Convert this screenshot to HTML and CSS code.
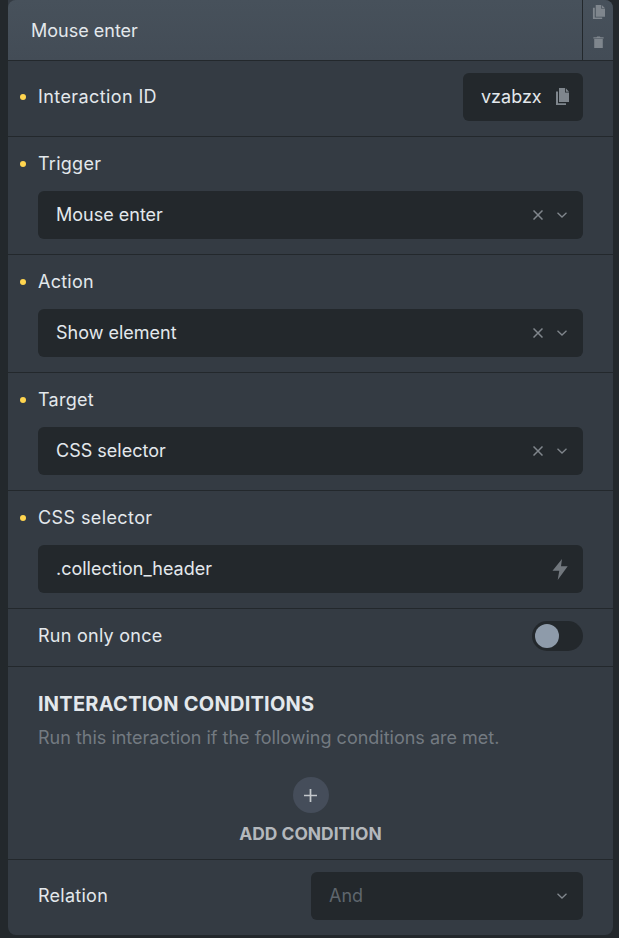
FILE: index.html
```html
<!DOCTYPE html>
<html lang="en">
<head>
<meta charset="utf-8">
<title>Mouse enter</title>
<link rel="stylesheet" href="styles.css">
</head>
<body>
<main class="card">
  <header class="head">
    <span class="head-title">Mouse enter</span>
    <div class="head-actions">
      <svg class="head-icon" viewBox="0 0 14 16"><path d="M4 0h6v4h4v8.5H4z"/><path d="M10.8 0.2 14 3.3h-3.2z"/><path d="M1 3h2v10.5h8V15H1z"/></svg>
      <svg class="head-icon trash" viewBox="0 0 12 14"><path d="M0 1.6h3.600L4.300.6h3.400l.7 1H12v1.200H0z"/><path d="M1 3.600h10V14H1z"/></svg>
    </div>
  </header>

  <section class="row row-inline row-id">
    <label class="label dot label-wide">Interaction ID</label>
    <div class="id-box">
      <span>vzabzx</span>
      <svg class="id-icon" viewBox="0 0 14 16" preserveAspectRatio="none"><path d="M4 0h6v4h4v8.5H4z"/><path d="M10.8 0.2 14 3.3h-3.2z"/><path d="M1 3h2v10.5h8V15H1z"/></svg>
    </div>
  </section>

  <section class="row row-stack">
    <label class="label dot">Trigger</label>
    <div class="field">
      <span class="field-text">Mouse enter</span>
      <svg class="x" viewBox="0 0 10 10"><path d="M.5.5l9 9M9.500.5l-9 9"/></svg>
      <svg class="chev" viewBox="0 0 10 6"><path d="M.5.8 5 5 9.500.8"/></svg>
    </div>
  </section>

  <section class="row row-stack">
    <label class="label dot">Action</label>
    <div class="field">
      <span class="field-text">Show element</span>
      <svg class="x" viewBox="0 0 10 10"><path d="M.5.5l9 9M9.500.5l-9 9"/></svg>
      <svg class="chev" viewBox="0 0 10 6"><path d="M.5.8 5 5 9.500.8"/></svg>
    </div>
  </section>

  <section class="row row-stack">
    <label class="label dot">Target</label>
    <div class="field">
      <span class="field-text">CSS selector</span>
      <svg class="x" viewBox="0 0 10 10"><path d="M.5.5l9 9M9.500.5l-9 9"/></svg>
      <svg class="chev" viewBox="0 0 10 6"><path d="M.5.8 5 5 9.500.8"/></svg>
    </div>
  </section>

  <section class="row row-stack">
    <label class="label dot label-wide">CSS selector</label>
    <div class="field">
      <span class="field-text">.collection_header</span>
      <svg class="bolt" viewBox="0 0 16 21"><path d="M10 0 .5 11.700h6.800L5.700 21l10-13.700H9z"/></svg>
    </div>
  </section>

  <section class="row row-inline row-toggle">
    <label class="label">Run only once</label>
    <div class="toggle"><span class="knob"></span></div>
  </section>

  <section class="conditions">
    <h3 class="cond-title">INTERACTION CONDITIONS</h3>
    <p class="cond-desc">Run this interaction if the following conditions are met.</p>
    <div class="add">
      <span class="add-btn"><svg viewBox="0 0 12 12"><path d="M6 0v12M0 6h12"/></svg></span>
      <span class="add-text">ADD CONDITION</span>
    </div>
  </section>

  <section class="row row-inline row-rel">
    <label class="label">Relation</label>
    <div class="field field-rel">
      <span class="field-text muted">And</span>
      <svg class="chev" viewBox="0 0 10 6"><path d="M.5.8 5 5 9.500.8"/></svg>
    </div>
  </section>
</main>
</body>
</html>
```
FILE: styles.css
```css
* { box-sizing: border-box; }
html, body { margin: 0; padding: 0; }
body {
  width: 619px;
  height: 938px;
  overflow: hidden;
  background: #23282c;
  font-family: Inter, "Liberation Sans", sans-serif;
  font-size: 18px;
  color: #e3e8ec;
  padding-left: 8px;
}
.card {
  width: 605px;
  height: 935px;
  background: #343b43;
  border-radius: 0 8px 8px 8px;
  overflow: hidden;
  display: flex;
  flex-direction: column;
}
.head {
  height: 61px;
  flex: none;
  display: flex;
  justify-content: space-between;
  border-bottom: 1px solid #23282c;
  background: linear-gradient(#47515b, #434c56);
  border-top-left-radius: 8px;
}
.head-title { padding: 1px 0 0 23px; line-height: 60px; }
.head-actions {
  width: 31px;
  border-left: 1px solid #23282c;
  display: flex;
  flex-direction: column;
  align-items: center;
  padding-top: 5px;
  gap: 16px;
}
.head-icon { width: 13px; height: 15px; fill: #7f868d; flex: none; }
.head-icon.trash { width: 11px; height: 12px; }
.row { border-bottom: 1px solid #23282c; padding: 0 30px; flex: none; }
.row-inline { display: flex; align-items: center; justify-content: space-between; }
.row-id { height: 76px; padding-bottom: 4px; }
.row-stack { height: 118px; padding-top: 15px; display: flex; flex-direction: column; }
.row-toggle { height: 58px; padding-bottom: 4px; }
.row-rel { height: 75px; border-bottom: 0; padding-bottom: 3px; }
.label { position: relative; line-height: 24px; letter-spacing: .26px; }
.label-wide { letter-spacing: .4px; }
.row-stack .label { margin-bottom: 15px; }
.dot::before {
  content: "";
  position: absolute;
  left: -18px;
  top: 9px;
  width: 6px;
  height: 6px;
  border-radius: 50%;
  background: #ffd54f;
}
.id-box {
  width: 120px;
  height: 48px;
  background: #23282c;
  border-radius: 6px;
  display: flex;
  align-items: center;
  padding-left: 18px;
  gap: 13px;
}
.id-icon { width: 14px; height: 18px; fill: #7f868d; }
.field {
  height: 48px;
  background: #23282c;
  border-radius: 6px;
  display: flex;
  align-items: center;
  padding: 0 16px 0 18px;
}
.field-text { flex: 1; position: relative; top: -1px; }
.muted { color: #5f666d; }
.x { width: 10px; height: 10px; stroke: #80868c; stroke-width: 1.5; fill: none; margin-right: 14px; }
.chev { width: 10px; height: 6px; stroke: #80868c; stroke-width: 1.3; fill: none; }
.bolt { width: 16px; height: 21px; fill: #71777d; margin-right: -1px; }
.toggle {
  width: 51px;
  height: 30px;
  background: #23282c;
  border-radius: 15px;
  padding: 3px;
}
.knob { display: block; width: 24px; height: 24px; border-radius: 50%; background: #8e9baa; }
.conditions {
  height: 193px;
  flex: none;
  border-bottom: 1px solid #23282c;
  padding: 23px 30px 0;
}
.cond-title { margin: 0; font-size: 20px; font-weight: 700; line-height: 28px; letter-spacing: .25px; color: #e3e8ec; }
.cond-desc { margin: 8px 0 0; line-height: 24px; color: #737a81; }
.add { margin-top: 27px; display: flex; flex-direction: column; align-items: center; }
.add-btn {
  width: 36px;
  height: 36px;
  border-radius: 50%;
  background: #454d5a;
  display: flex;
  align-items: center;
  justify-content: center;
}
.add-btn svg { width: 13px; height: 13px; stroke: #c4c8cc; stroke-width: 1.6; fill: none; }
.add-text { margin-top: 9px; font-weight: 700; line-height: 24px; color: #b4b8bc; font-size: 17.4px; }
.field-rel { width: 272px; }
```
